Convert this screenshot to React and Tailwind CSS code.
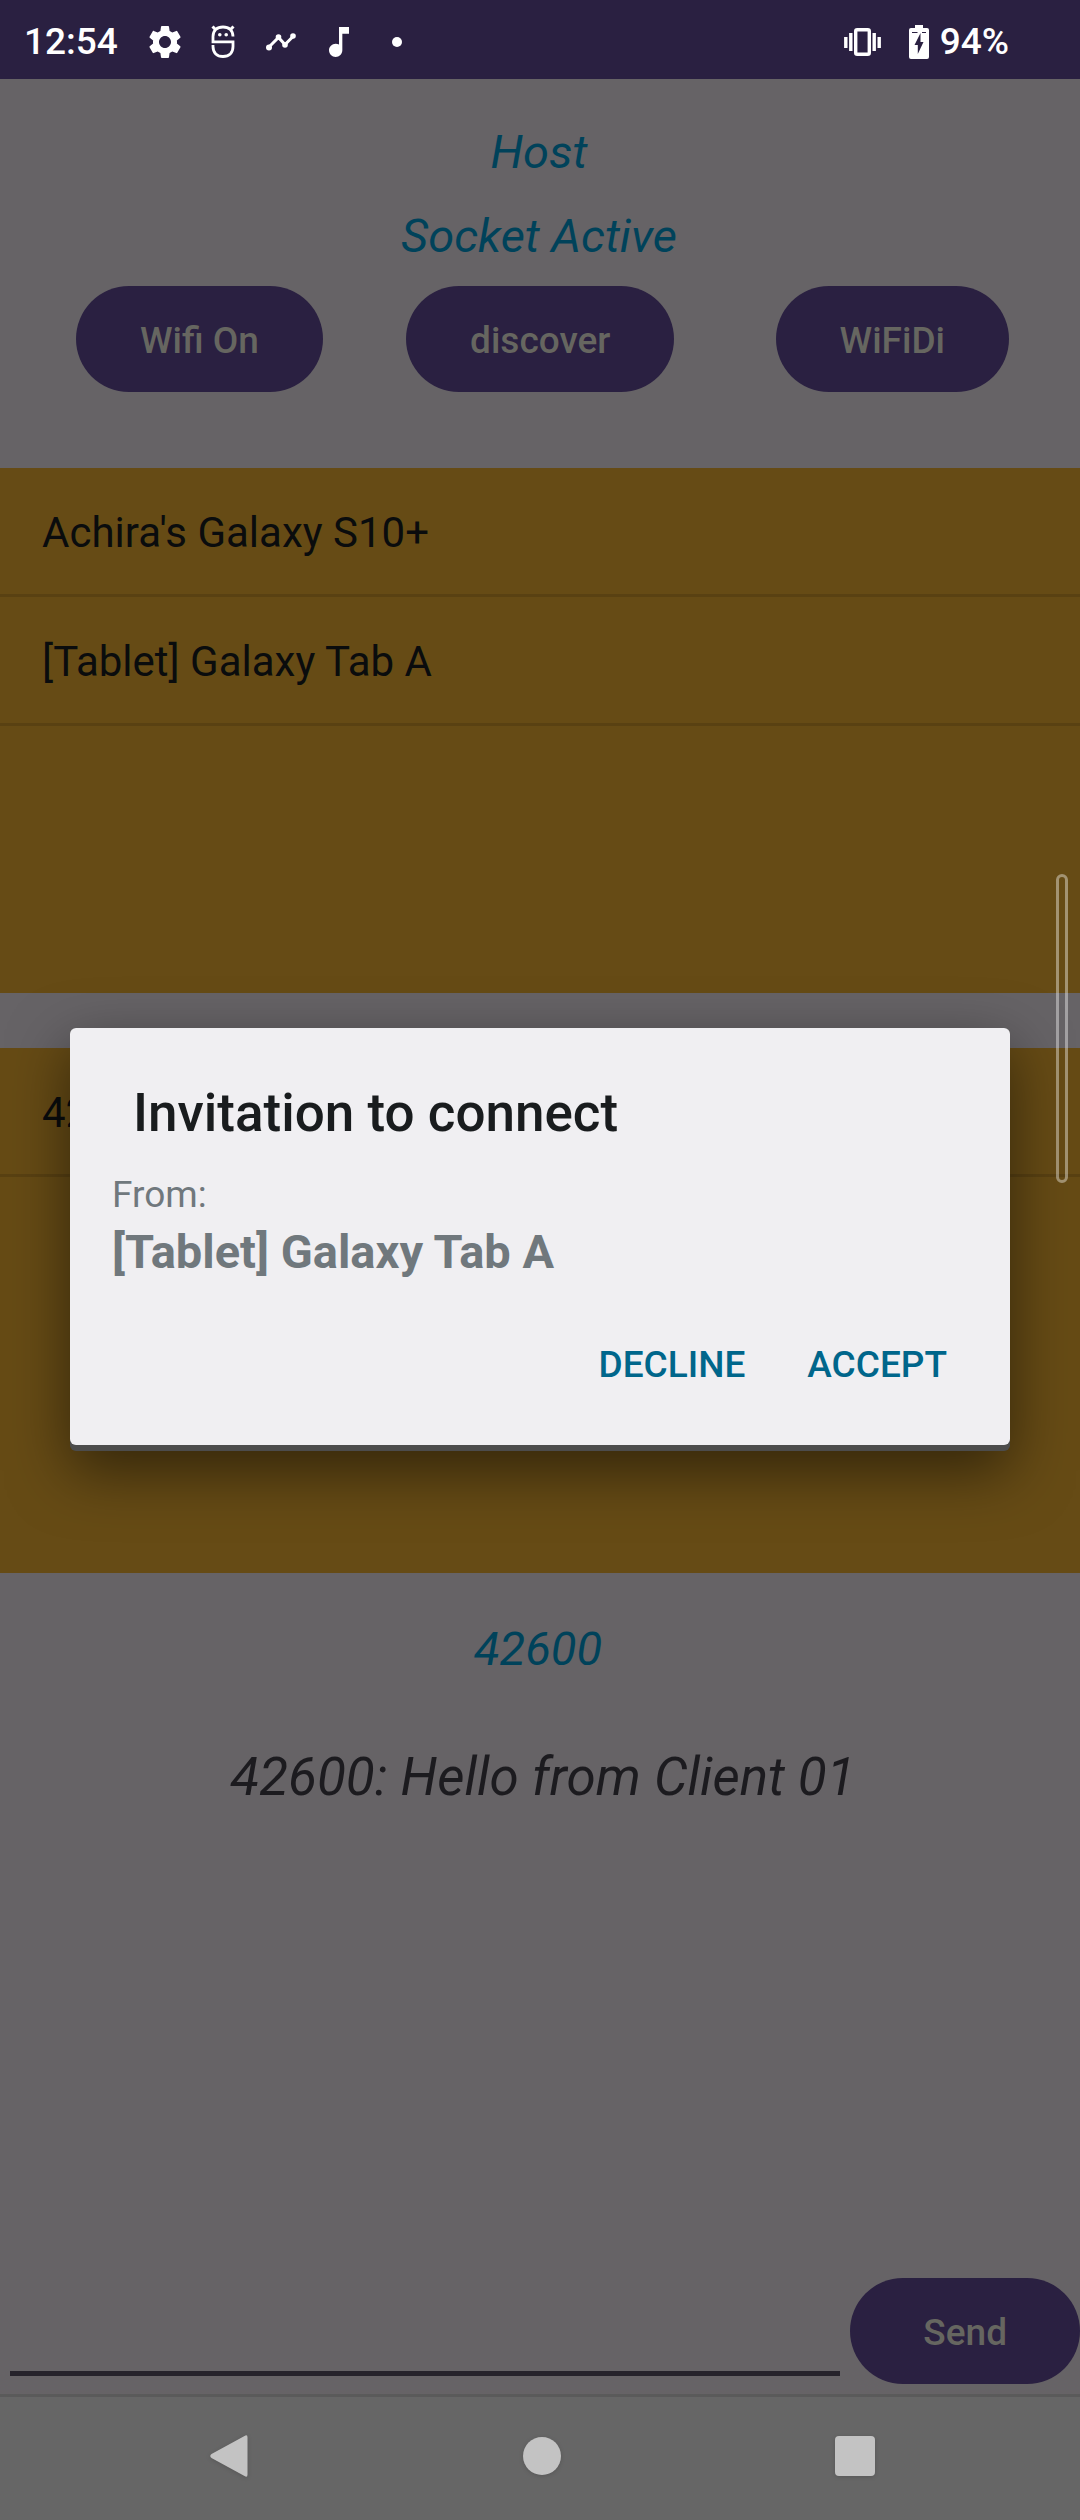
import React from "react";
import { MdSettings, MdMusicNote } from "react-icons/md";

const pill =
  "h-[106px] shrink-0 rounded-full bg-[#2a2041] pt-[3px] text-[37px] font-medium leading-[44px] text-[#666660]";

function StatusBar() {
  return (
    <header className="flex h-[79px] shrink-0 items-center bg-[#2a2041] pl-6 pr-[71px] pt-1 text-[37px] font-medium text-white">
      <time>12:54</time>
      <MdSettings className="ml-[27px] size-10" />
      <svg className="ml-[26px] h-[33px] w-6" viewBox="0 0 24 33" fill="none" stroke="currentColor" strokeWidth="2.8">
        <path d="M22 11.500C22 5.500 18 2 12 2S2 5.500 2 11.500V16.800H22V21.500C22 28 18 31.500 12 31.500S2 28 2 21.500V20" />
        <path d="M1.500 1.500L5 5M22.500 1.500L19 5" strokeWidth="3" />
        <circle cx="8.800" cy="9.800" r="1.800" fill="currentColor" stroke="none" />
        <circle cx="15.200" cy="9.800" r="1.800" fill="currentColor" stroke="none" />
      </svg>
      <svg className="ml-[31px] h-[18px] w-[30px]" viewBox="0 0 30 18" fill="currentColor">
        <path d="M3 14L12.500 4.500L19 11.500L27.500 3" fill="none" stroke="currentColor" strokeWidth="3" />
        <circle cx="3" cy="14.500" r="3" />
        <circle cx="12.500" cy="4" r="2.800" />
        <circle cx="19" cy="12" r="2.800" />
        <circle cx="27" cy="3" r="2.800" />
      </svg>
      <MdMusicNote className="ml-[23px] size-10" />
      <span className="ml-[33px] size-2.5 rounded-full bg-white" />
      <svg className="ml-auto h-7 w-[37px]" viewBox="0 0 37 28" fill="none" stroke="currentColor" strokeWidth="3.4">
        <rect x="11.700" y="1.700" width="13.600" height="24.600" rx="1.500" />
        <path d="M6.800 5V23M30.200 5V23M1.800 9V20M35.200 9V20" />
      </svg>
      <svg className="ml-7 h-[34px] w-5" viewBox="0 0 20 34" fill="currentColor">
        <path d="M6 0H14V3H18Q20 3 20 5V32Q20 34 18 34H2Q0 34 0 32V5Q0 3 2 3H6Z" />
        <path d="M3 7.500H8.500M13 7.500H17" stroke="#2a2041" strokeWidth="1" />
        <path d="M11.500 8L5.500 20H8.800V29L14.500 17H11.500Z" fill="#2a2041" />
      </svg>
      <span className="ml-[11px]">94%</span>
    </header>
  );
}

function PeerList({ items }) {
  return (
    <ul className="h-[525px] shrink-0 bg-[#664b15]">
      {items.map((name) => (
        <li key={name} className="flex h-[129px] items-center border-b-[3px] border-[#594112] px-[42px] pt-[3px] text-[42px] leading-[50px] text-[#0a0c0d]">
          {name}
        </li>
      ))}
    </ul>
  );
}

function InvitationDialog() {
  return (
    <div className="absolute inset-0 flex items-center justify-center px-[70px] pt-1.5">
      <section
        role="dialog"
        aria-labelledby="invite-title"
        className="w-full rounded-[6px] border-b-[6px] border-[#4c4c4c] bg-[#4c4c4c] shadow-[0_20px_60px_rgba(0,0,0,0.5)]"
      >
        <div className="rounded-[6px] bg-[#f0eff2] pb-7 pt-[53px]">
          <h1 id="invite-title" className="px-[63px] text-[53px] font-medium leading-[64px] text-[#191c1e]">
            Invitation to connect
          </h1>
          <div className="mt-7 px-[42px] text-[#70787d]">
            <p className="text-[37px] leading-[44px]">From:</p>
            <p className="mt-[7px] text-[47px] font-bold leading-[56px]">[Tablet] Galaxy Tab A</p>
          </div>
          <div className="mt-8 flex justify-end gap-[20px] px-[42px] text-[37px] font-medium leading-[44px] text-[#00668b]">
            <button className="h-[105px] px-[21px]">DECLINE</button>
            <button className="h-[105px] px-[21px]">ACCEPT</button>
          </div>
        </div>
      </section>
    </div>
  );
}

export default function App() {
  return (
    <div className="flex min-h-screen flex-col bg-[#666366] font-['Roboto',sans-serif]">
      <StatusBar />
      <main className="relative flex grow flex-col">
        <div className="pr-0.5 pt-[43px] text-center text-[47px] italic leading-[60px] text-[#00425a]">
          <p>Host</p>
          <p className="mt-6">Socket Active</p>
        </div>
        <div className="mt-5 flex items-center justify-between pl-[76px] pr-[71px]">
          <button className={pill + " px-16"}>Wifi On</button>
          <button className={pill + " mr-[18px] px-16"}>discover</button>
          <button className={pill + " px-16"}>WiFiDi</button>
        </div>
        <div className="mt-[76px] flex flex-col gap-[55px]">
          <PeerList items={["Achira's Galaxy S10+", "[Tablet] Galaxy Tab A"]} />
          <PeerList items={["42600"]} />
        </div>
        <p className="mt-[46px] pr-1 text-center text-[47px] italic leading-[60px] text-[#00425a]">42600</p>
        <p className="mt-[66px] pl-1.5 text-center text-[53px] italic leading-[64px] text-[#1c1b1f]">
          42600: Hello from Client 01
        </p>
        <form className="mt-auto flex items-end pb-2.5" onSubmit={(e) => e.preventDefault()}>
          <input
            aria-label="Message"
            className="mx-2.5 mb-2 h-[80px] min-w-0 grow border-b-[5px] border-[#26232b] bg-transparent text-[42px] outline-none"
          />
          <button className={pill + " px-[73px]"}>Send</button>
        </form>
        <div className="absolute right-3 top-[795px] h-[309px] w-3 rounded-full border-[3px] border-white/40" />
        <InvitationDialog />
      </main>
      <nav className="flex h-[126px] shrink-0 items-center justify-between border-t-[3px] border-[#5a5a5a] bg-[#666666] pb-1.5 pl-[210px] pr-[205px] text-[#c3c3c3]">
        <button aria-label="Back">
          <svg className="h-[42px] w-[38px] drop-shadow-sm" viewBox="0 0 38 42" fill="currentColor">
            <path d="M34.500 1Q37.500 -1 37.500 2.500V39.500Q37.500 43 34.500 41L1.500 23Q-1 21 1.500 19Z" />
          </svg>
        </button>
        <button aria-label="Home" className="size-[38px] rounded-full bg-current drop-shadow-sm" />
        <button aria-label="Recents" className="size-10 rounded-[4px] bg-current drop-shadow-sm" />
      </nav>
    </div>
  );
}
